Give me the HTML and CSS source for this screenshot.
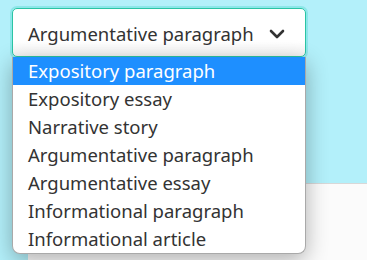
FILE: index.html
```html
<!DOCTYPE html>
<html lang="en">
<head>
  <meta charset="UTF-8" />
  <meta name="viewport" content="width=device-width, initial-scale=1.0"/>
  <title>Essay type</title>
  <link rel="stylesheet" href="styles.css">
</head>
<body>

<div class="field">
  <div class="select">
    <span class="value">Argumentative paragraph</span>
    <svg class="chevron" width="16" height="10" viewBox="0 0 16 10">
      <path d="M2 2 L8 8 L14 2" fill="none" stroke="#333" stroke-width="2.6" stroke-linecap="round" stroke-linejoin="round"/>
    </svg>
  </div>
  <ul class="menu">
    <li class="active">Expository paragraph</li>
    <li>Expository essay</li>
    <li>Narrative story</li>
    <li>Argumentative paragraph</li>
    <li>Argumentative essay</li>
    <li>Informational paragraph</li>
    <li>Informational article</li>
  </ul>
</div>

<div class="panel"></div>

</body>
</html>
```
FILE: styles.css
```css
body {
  margin: 0;
  height: 260px;
  overflow: hidden;
  background: #b3f0fa;
  font-family: "Noto Sans", "Open Sans", sans-serif;
  color: #333;
}
.field {
  position: relative;
  width: 294px;
  margin: 8px 0 0 12px;
  z-index: 2;
}
.select {
  box-sizing: border-box;
  height: 49px;
  display: flex;
  align-items: center;
  justify-content: space-between;
  padding: 2px 20px 0 15px;
  background: linear-gradient(#fff 70%, #f3f3f3);
  border: 1px solid #2bc4a4;
  border-radius: 5px;
  box-shadow: 0 0 0 2px rgba(70, 215, 200, 0.35);
  font-size: 18.5px;
}
.menu {
  position: absolute;
  top: 49px;
  left: 0;
  right: 0;
  margin: 0;
  padding: 0;
  list-style: none;
  background: #fff;
  border: 1px solid #a9a9a9;
  border-top: none;
  border-radius: 0 0 8px 8px;
  box-shadow: 0 6px 22px rgba(0, 0, 0, 0.3);
  overflow: hidden;
  font-size: 18.5px;
}
.menu li {
  height: 28px;
  line-height: 27px;
  padding-left: 15px;
}
.menu li.active {
  background: #1e8fff;
  color: #fff;
}
.panel {
  margin: 126px 0 0 28px;
  height: 80px;
  background: #fbfbfb;
  border-top: 1px solid #d8d8d8;
}
```
